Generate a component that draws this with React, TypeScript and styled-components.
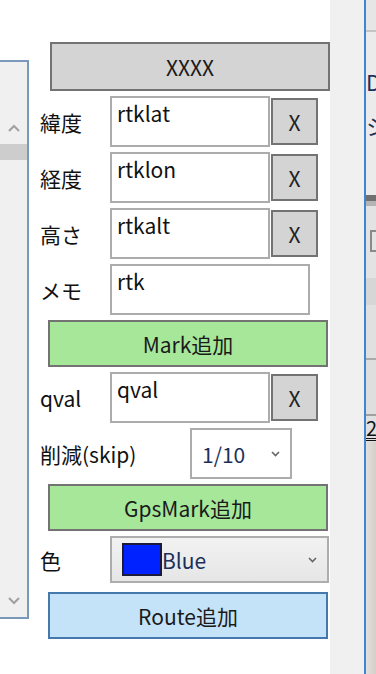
import React from "react";
import styled, { createGlobalStyle } from "styled-components";

const GlobalStyle = createGlobalStyle`
  html, body {
    margin: 0;
    padding: 0;
    background: #ffffff;
  }
  body {
    font-family: "Noto Sans CJK JP", "Noto Sans", sans-serif;
  }
`;

const Page = styled.div`
  display: flex;
  width: 376px;
  height: 674px;
  overflow: hidden;
  font-family: "Noto Sans CJK JP", "Noto Sans", sans-serif;
  font-size: 21px;
  color: #111111;
`;

const MainPanel = styled.div`
  display: flex;
  align-items: flex-start;
  width: 330px;
  flex-shrink: 0;
  background: #ffffff;
`;

const ListBox = styled.div`
  box-sizing: border-box;
  display: flex;
  flex-direction: column;
  width: 29px;
  height: 559px;
  margin-top: 60px;
  background: #f0f0f0;
  border: 2px solid #7a98ba;
  border-left: none;
`;

const ScrollButton = styled.div<{ $top?: number }>`
  display: flex;
  align-items: center;
  justify-content: center;
  height: 32px;
  margin-top: ${({ $top }) => $top ?? 0}px;
`;

const Thumb = styled.div`
  height: 16px;
  background: #cdcdcd;
`;

const TrackFill = styled.div`
  flex: 1;
`;

const Form = styled.div`
  display: flex;
  flex-direction: column;
  gap: 5px;
  width: 301px;
  padding-top: 42px;
`;

const ActionButton = styled.div<{
  $bg: string;
  $border: string;
  $left: number;
  $height: number;
  $top?: number;
}>`
  box-sizing: border-box;
  display: flex;
  align-items: center;
  justify-content: center;
  width: 280px;
  height: ${({ $height }) => $height}px;
  margin-left: ${({ $left }) => $left}px;
  margin-top: ${({ $top }) => $top ?? 0}px;
  background: ${({ $bg }) => $bg};
  border: 2px solid ${({ $border }) => $border};
  color: #1a1a1a;
`;

const FieldRow = styled.div<{ $height?: number }>`
  display: flex;
  align-items: center;
  height: ${({ $height }) => $height ?? 51}px;
  margin-left: 11px;
`;

const Label = styled.div<{ $width?: number }>`
  width: ${({ $width }) => $width ?? 70}px;
  flex-shrink: 0;
  white-space: nowrap;
`;

const TextBox = styled.div<{ $width?: number }>`
  box-sizing: border-box;
  width: ${({ $width }) => $width ?? 160}px;
  height: 100%;
  padding: 3px 5px;
  line-height: 1.2;
  background: #ffffff;
  border: 2px solid #acacac;
`;

const ClearButton = styled.div`
  box-sizing: border-box;
  display: flex;
  align-items: center;
  justify-content: center;
  width: 47px;
  height: 47px;
  margin-left: 1px;
  background: #d4d4d4;
  border: 2px solid #737373;
  color: #222222;
`;

const Select = styled.div<{ $width: number; $grey?: boolean }>`
  box-sizing: border-box;
  display: flex;
  align-items: center;
  width: ${({ $width }) => $width}px;
  height: 100%;
  padding: 0 10px 0 10px;
  background: ${({ $grey }) =>
    $grey ? "linear-gradient(#f2f2f2, #e6e6e6)" : "#ffffff"};
  border: 2px solid ${({ $grey }) => ($grey ? "#adadad" : "#acacac")};
`;

const SelectText = styled.div`
  flex: 1;
  color: #1c2f5a;
`;

const Swatch = styled.div`
  box-sizing: border-box;
  width: 40px;
  height: 33px;
  background: #0022ff;
  border: 2px solid #1a1a3a;
  flex-shrink: 0;
`;

const Gutter = styled.div`
  width: 34px;
  flex-shrink: 0;
  background: #f0f0f0;
`;

const Splitter = styled.div`
  width: 2px;
  flex-shrink: 0;
  background: #3d86d6;
`;

const SideStrip = styled.div`
  display: flex;
  flex-direction: column;
  width: 10px;
  flex-shrink: 0;
  overflow: hidden;
`;

const SideBlock = styled.div<{ $h: number; $bg: string }>`
  position: relative;
  height: ${({ $h }) => $h}px;
  flex-shrink: 0;
  background: ${({ $bg }) => $bg};
  overflow: hidden;
  white-space: nowrap;
`;

const SideFill = styled.div`
  flex: 1;
  background: linear-gradient(to right, #e2dfda, #d4d0c8);
`;

const SideGlyph = styled.div<{ $top: number }>`
  padding-top: ${({ $top }) => $top}px;
  font-size: 22px;
  line-height: 1;
  color: #1c2f5a;
`;

const SideBox = styled.div`
  box-sizing: border-box;
  width: 12px;
  height: 22px;
  margin: 24px 0 0 4px;
  border: 2px solid #8a8a8a;
`;

const Underlined = styled.div`
  padding-top: 2px;
  font-size: 20px;
  line-height: 1;
  color: #111111;
  border-bottom: 3px double #111111;
  width: 14px;
`;

function Chevron({ up, color = "#a0a0a0" }: { up?: boolean; color?: string }) {
  return (
    <svg width="12" height="8" viewBox="0 0 12 8">
      <polyline
        points={up ? "1,7 6,2 11,7" : "1,1 6,6 11,1"}
        fill="none"
        stroke={color}
        strokeWidth="2"
      />
    </svg>
  );
}

function SmallChevron() {
  return (
    <svg width="9" height="6" viewBox="0 0 9 6">
      <polyline points="1,1 4.5,4.5 8,1" fill="none" stroke="#666" strokeWidth="1.6" />
    </svg>
  );
}

const coordFields = [
  { label: "緯度", value: "rtklat" },
  { label: "経度", value: "rtklon" },
  { label: "高さ", value: "rtkalt" },
];

export default function App() {
  return (
    <>
      <GlobalStyle />
      <Page>
        <MainPanel>
          <ListBox>
            <ScrollButton $top={50}>
              <Chevron up />
            </ScrollButton>
            <Thumb />
            <TrackFill />
            <ScrollButton>
              <Chevron />
            </ScrollButton>
          </ListBox>

          <Form>
            <ActionButton $bg="#d4d4d4" $border="#737373" $left={21} $height={49}>
              XXXX
            </ActionButton>

            {coordFields.map((f) => (
              <FieldRow key={f.label}>
                <Label>{f.label}</Label>
                <TextBox>{f.value}</TextBox>
                <ClearButton>X</ClearButton>
              </FieldRow>
            ))}

            <FieldRow>
              <Label>メモ</Label>
              <TextBox $width={200}>rtk</TextBox>
            </FieldRow>

            <ActionButton $bg="#a6e79a" $border="#737373" $left={19} $height={47}>
              Mark追加
            </ActionButton>

            <FieldRow>
              <Label>qval</Label>
              <TextBox>qval</TextBox>
              <ClearButton>X</ClearButton>
            </FieldRow>

            <FieldRow>
              <Label $width={150}>削減(skip)</Label>
              <Select $width={102}>
                <SelectText>1/10</SelectText>
                <SmallChevron />
              </Select>
            </FieldRow>

            <ActionButton $bg="#a6e79a" $border="#737373" $left={19} $height={47}>
              GpsMark追加
            </ActionButton>

            <FieldRow $height={47}>
              <Label>色</Label>
              <Select $width={219} $grey>
                <Swatch />
                <SelectText>Blue</SelectText>
                <SmallChevron />
              </Select>
            </FieldRow>

            <ActionButton $bg="#c5e3f8" $border="#4579ad" $left={19} $height={47} $top={4}>
              Route追加
            </ActionButton>
          </Form>
        </MainPanel>

        <Gutter />
        <Splitter />

        <SideStrip>
          <SideBlock $h={30} $bg="#e6e6e6" />
          <SideBlock $h={2} $bg="#c4c4c4" />
          <SideBlock $h={163} $bg="#ebebeb">
            <SideGlyph $top={38}>D</SideGlyph>
            <SideGlyph $top={22}>シ</SideGlyph>
          </SideBlock>
          <SideBlock $h={6} $bg="#707070" />
          <SideBlock $h={5} $bg="#b4b4b4" />
          <SideBlock $h={72} $bg="#e3e3e3">
            <SideBox />
          </SideBlock>
          <SideBlock $h={27} $bg="#d6d6d6" />
          <SideBlock $h={53} $bg="#e0e0e0" />
          <SideBlock $h={2} $bg="#a9a9a9" />
          <SideBlock $h={54} $bg="#dedede" />
          <SideBlock $h={2} $bg="#a0a0a0" />
          <SideBlock $h={26} $bg="#e0e0e0">
            <Underlined>2</Underlined>
          </SideBlock>
          <SideFill />
        </SideStrip>
      </Page>
    </>
  );
}
